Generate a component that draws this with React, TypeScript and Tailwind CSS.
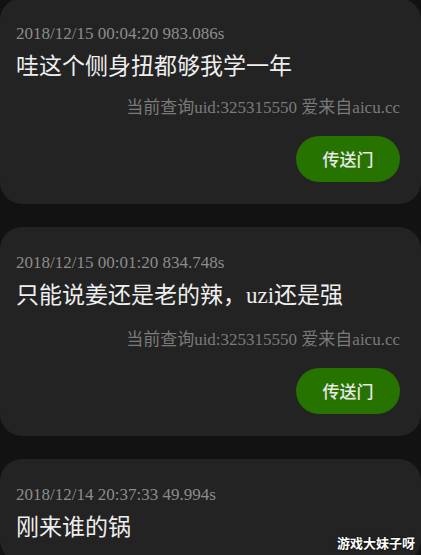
import React from "react";

const posts = [
  {
    id: 1,
    time: "2018/12/15 00:04:20 983.086s",
    text: "哇这个侧身扭都够我学一年",
    showFooter: true,
  },
  {
    id: 2,
    time: "2018/12/15 00:01:20 834.748s",
    text: "只能说姜还是老的辣，uzi还是强",
    showFooter: true,
  },
  {
    id: 3,
    time: "2018/12/14 20:37:33 49.994s",
    text: "刚来谁的锅",
    showFooter: false,
  },
];

const font = "font-['Liberation_Serif','Noto_Sans_CJK_SC',serif]";

const App = () => {
  return (
    <div className="relative w-[421px] h-[555px] overflow-hidden bg-[#121212]">
      <div className="flex flex-col gap-[23px] -mt-[2px]">
        {posts.map((post) => (
          <div
            key={post.id}
            className={`bg-[#232323] rounded-[22px] pt-[26px] pb-[22px] pl-[16px] pr-[21px] flex flex-col ${font}`}
          >
            {/* time line */}
            <p className="text-[17px] leading-[20px] text-[#8c8c8c]">
              {post.time}
            </p>
            {/* comment */}
            <p className="mt-[5px] text-[23px] leading-[30px] text-[#eeeeee] font-['Noto_Sans_CJK_SC',sans-serif] whitespace-nowrap">
              {post.text.split(/(uzi)/).map((part, i) =>
                part === "uzi" ? (
                  <span key={i} className="font-['Liberation_Serif',serif]">
                    {part}
                  </span>
                ) : (
                  <span key={i}>{part}</span>
                )
              )}
            </p>
            {post.showFooter && (
              <>
                <p className="mt-[18px] text-right text-[17px] leading-[22px] text-[#7a7a7a] whitespace-nowrap">
                  当前查询uid:325315550 爱来自aicu.cc
                </p>
                <div className="mt-[17px] flex justify-end">
                  <button className="w-[104px] h-[46px] rounded-full bg-[#277300] text-[#e8e8e8] text-[17px] font-medium font-['Noto_Sans_CJK_SC',sans-serif]">
                    传送门
                  </button>
                </div>
              </>
            )}
          </div>
        ))}
      </div>

      {/* watermark */}
      <span className="absolute right-[6px] bottom-[4px] text-[13px] leading-[16px] font-bold text-white font-['Noto_Sans_CJK_SC',sans-serif] [text-shadow:0_0_2px_#000]">
        游戏大妹子呀
      </span>
    </div>
  );
};

export default App;
